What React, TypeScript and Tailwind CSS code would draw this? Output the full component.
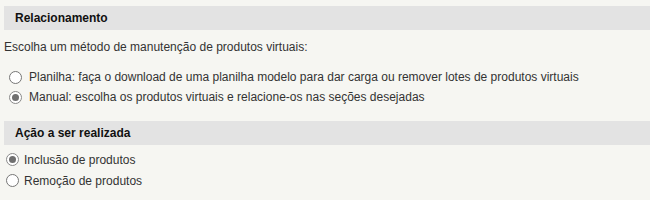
import React, { useState } from 'react';

interface RadioProps {
  checked: boolean;
  label: string;
  onSelect: () => void;
  indent?: boolean;
}

const Radio: React.FC<RadioProps> = ({ checked, label, onSelect, indent }) => (
  <label
    onClick={onSelect}
    className={`flex items-center cursor-pointer ${indent ? 'h-[20px] pl-[9px]' : 'h-[21px] pl-[6px]'}`}
  >
    <span
      className={`w-[13px] h-[13px] rounded-full border bg-white flex items-center justify-center shrink-0 ${
        checked ? 'border-[#8a8a8a]' : 'border-[#767676]'
      }`}
    >
      {checked && <span className="w-[7px] h-[7px] rounded-full bg-[#6f6f6f]" />}
    </span>
    <span className={indent ? 'ml-[7px]' : 'ml-[5px]'}>{label}</span>
  </label>
);

const SectionHeader: React.FC<{ title: string }> = ({ title }) => (
  <div className="ml-[4px] h-[24px] bg-[#e3e3e3] flex items-center pl-[11px] font-bold text-[#111]">
    {title}
  </div>
);

export default function App() {
  const [mode, setMode] = useState<'planilha' | 'manual'>('manual');
  const [action, setAction] = useState<'inclusao' | 'remocao'>('inclusao');

  return (
    <div className="w-full min-h-[200px] bg-[#f6f6f2] pt-[6px] font-['Liberation_Sans',Arial,sans-serif] text-[12px] leading-[14px] text-[#333]">
      <SectionHeader title="Relacionamento" />
      <p className="mt-[10px] pl-[4px]">Escolha um método de manutenção de produtos virtuais:</p>

      <div className="mt-[13px]">
        <Radio
          indent
          checked={mode === 'planilha'}
          onSelect={() => setMode('planilha')}
          label="Planilha: faça o download de uma planilha modelo para dar carga ou remover lotes de produtos virtuais"
        />
        <Radio
          indent
          checked={mode === 'manual'}
          onSelect={() => setMode('manual')}
          label="Manual: escolha os produtos virtuais e relacione-os nas seções desejadas"
        />
      </div>

      <div className="mt-[14px]">
        <SectionHeader title="Ação a ser realizada" />
      </div>

      <div className="mt-[4px]">
        <Radio
          checked={action === 'inclusao'}
          onSelect={() => setAction('inclusao')}
          label="Inclusão de produtos"
        />
        <Radio
          checked={action === 'remocao'}
          onSelect={() => setAction('remocao')}
          label="Remoção de produtos"
        />
      </div>
    </div>
  );
}
